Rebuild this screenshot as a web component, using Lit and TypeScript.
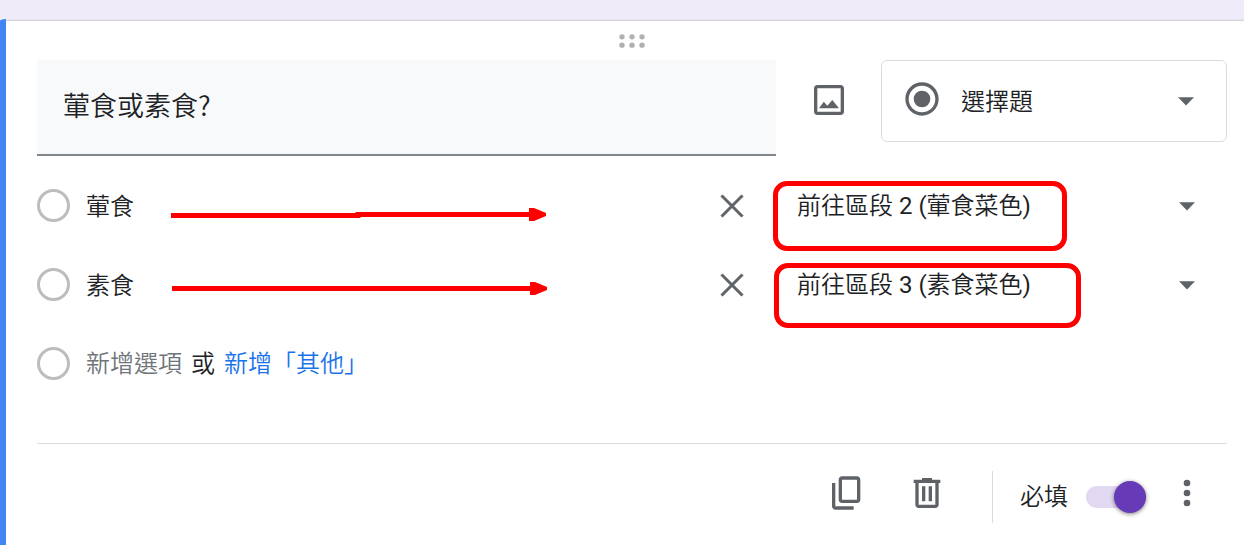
import { LitElement, html, svg, css } from "lit";
import { customElement, state } from "lit/decorators.js";

const paths = {
  image: svg`<path d="M19 3H5c-1.1 0-2 .9-2 2v14c0 1.1.9 2 2 2h14c1.1 0 2-.9 2-2V5c0-1.100-.9-2-2-2zm0 16H5V5h14v14z"/><path d="M6 17l2.900-4 2.100 2.500 3-3.500 4 5z"/>`,
  radio: svg`<path d="M12 2C6.480 2 2 6.480 2 12s4.480 10 10 10 10-4.480 10-10S17.520 2 12 2zm0 18c-4.420 0-8-3.580-8-8s3.580-8 8-8 8 3.580 8 8-3.580 8-8 8z"/><circle cx="12" cy="12" r="5"/>`,
  arrow: svg`<path d="M7.200 9.800l4.800 4.900 4.800-4.900z"/>`,
  close: svg`<path d="M18.700 6.300L17.700 5.300 12 11 6.300 5.300 5.300 6.300 11 12 5.300 17.700 6.300 18.700 12 13 17.700 18.700 18.700 17.700 13 12z" stroke="#5f6368" stroke-width="0.400"/>`,
  copy: svg`<path d="M18 2H9c-1.100 0-2 .9-2 2v12c0 1.100.9 2 2 2h9c1.100 0 2-.9 2-2V4c0-1.100-.9-2-2-2zm0 14H9V4h9v12z"/><path d="M3 6h2v14h11v2H5c-1.100 0-2-.9-2-2z"/>`,
  trash: svg`<path d="M15 4V3H9v1H4v2h1v13c0 1.100.9 2 2 2h10c1.100 0 2-.9 2-2V6h1V4h-5zm2 15H7V6h10v13z"/><path d="M9 8h2v9H9zm4 0h2v9h-2z"/>`,
  more: svg`<circle cx="12" cy="6" r="2"/><circle cx="12" cy="12" r="2"/><circle cx="12" cy="18" r="2"/>`,
  drag: svg`<circle cx="6" cy="9.500" r="1.600"/><circle cx="12" cy="9.500" r="1.600"/><circle cx="18" cy="9.500" r="1.600"/><circle cx="6" cy="14.500" r="1.600"/><circle cx="12" cy="14.500" r="1.600"/><circle cx="18" cy="14.500" r="1.600"/>`,
};

const icon = (name: keyof typeof paths) =>
  html`<svg class="icon" viewBox="0 0 24 24" aria-hidden="true">${paths[name]}</svg>`;

interface Choice {
  label: string;
  target: string;
  line: string;
  mark: string;
}

@customElement("app-root")
export class AppRoot extends LitElement {
  @state() private required = true;

  private choices: Choice[] = [
    { label: "葷食", target: "前往區段 2 (葷食菜色)", line: "M0 9.500H187V8.500H360", mark: "first" },
    { label: "素食", target: "前往區段 3 (素食菜色)", line: "M0 8.500H360", mark: "second" },
  ];

  static styles = css`
    :host {
      display: flex;
      box-sizing: border-box;
      min-height: 100vh;
      padding-top: 19px;
      background: #f0ebf8;
      color: #202124;
      font: 400 24px/32px Roboto, "Noto Sans CJK TC DemiLight", "Noto Sans CJK TC", sans-serif;
    }
    * {
      box-sizing: border-box;
    }
    input,
    select,
    button {
      appearance: none;
      margin: 0;
      padding: 0;
      border: 0;
      border-radius: 0;
      background: none;
      color: inherit;
      font: inherit;
      min-width: 0;
    }
    button {
      cursor: pointer;
    }
    .icon {
      display: block;
      width: 40px;
      height: 40px;
      fill: #5f6368;
    }
    .accent {
      flex: none;
      width: 6px;
      border-top-left-radius: 6px 2px;
      background: #4285f4;
    }
    .card {
      flex: 1;
      min-width: 0;
      margin-top: 2px;
      padding: 0 17px 0 31px;
      background: #fff;
      box-shadow: 0 0 2px rgba(0, 0, 0, 0.35);
      clip-path: inset(-2px 0 0 0);
    }
    .drag {
      display: flex;
      justify-content: center;
      height: 39px;
    }
    .drag .icon {
      fill: #b0b0b0;
    }
    .head {
      display: grid;
      grid-template-columns: 1fr 105px 346px;
      align-items: start;
      margin-bottom: 10px;
    }
    .title {
      height: 96px;
      padding: 0 26px 6px;
      border-bottom: 2px solid #80868b;
      background: #f8f9fa;
      font-family: "Noto Sans CJK TC", sans-serif;
      font-weight: 350;
      font-size: 27px;
    }
    .picture {
      justify-self: center;
      margin-top: 20px;
    }
    .pick {
      display: grid;
      align-items: center;
      position: relative;
    }
    .pick > .icon {
      pointer-events: none;
    }
    .kind {
      grid-template-columns: 20px 40px 1fr 40px 20px;
      height: 82px;
      border: 1px solid #dadce0;
      border-radius: 6px;
    }
    .kind select {
      grid-area: 1 / 1 / 2 / 6;
      height: 80px;
      padding-top: 2px;
      padding-left: 79px;
    }
    .kind > .icon {
      grid-area: 1 / 4;
    }
    .kind > .lead {
      grid-area: 1 / 2;
      margin-bottom: 4px;
    }
    .row {
      position: relative;
      display: grid;
      grid-template-columns: 33px 1fr 40px 45px 430px;
      align-items: center;
      height: 79px;
    }
    .circle {
      width: 33px;
      height: 33px;
      border: 3px solid #bdbdbd;
      border-radius: 50%;
    }
    .name {
      height: 40px;
      margin-left: 16px;
      padding-bottom: 2px;
    }
    .row .pick {
      grid-column: 5;
      grid-template-columns: 1fr 40px 20px;
    }
    .row .pick select {
      grid-area: 1 / 1 / 2 / 4;
      height: 79px;
      padding-right: 60px;
    }
    .row .pick > .icon {
      grid-area: 1 / 2;
    }
    .pointer {
      position: absolute;
      left: 134px;
      top: 40px;
      width: 380px;
      height: 18px;
      pointer-events: none;
    }
    .second .pointer {
      top: 35px;
      left: 135px;
    }
    .pointer .line {
      fill: none;
      stroke: #f00;
      stroke-width: 5px;
    }
    .pointer .tip {
      fill: #f00;
    }
    .outline {
      position: absolute;
      left: -24px;
      top: 15px;
      width: 294px;
      height: 70px;
      border: 5px solid #f00;
      border-radius: 14px;
      pointer-events: none;
    }
    .second .outline {
      left: -23px;
      top: 18px;
      width: 307px;
      height: 65px;
    }
    .add {
      display: flex;
      gap: 9px;
      margin-left: 16px;
      white-space: nowrap;
    }
    .add .new {
      color: #70757a;
    }
    .add .other {
      color: #1a73e8;
    }
    .foot {
      display: flex;
      justify-content: flex-end;
      align-items: center;
      height: 106px;
      margin-top: 40px;
      padding-right: 20px;
      border-top: 1px solid #dadce0;
    }
    .tools {
      display: flex;
      gap: 40px;
      margin-bottom: 8px;
    }
    .rule {
      width: 1px;
      height: 52px;
      margin: 0 27px 0 45px;
      background: #dadce0;
    }
    .need {
      display: flex;
      align-items: center;
      gap: 18px;
      margin-right: 21px;
    }
    .switch {
      display: flex;
      align-items: center;
      width: 60px;
      height: 22px;
      border-radius: 11px;
      background: #e1d8f1;
    }
    .switch::before {
      content: "";
      width: 32px;
      height: 32px;
      border-radius: 50%;
      background: #fff;
      box-shadow: 0 1px 4px rgba(0, 0, 0, 0.5);
    }
    .switch:checked::before {
      margin-left: auto;
      background: #673ab7;
    }
    .more {
      margin-bottom: 8px;
    }
  `;

  private renderChoice(c: Choice) {
    return html`<div class="row ${c.mark}">
      <input class="circle" type="radio" name="answer" aria-label=${c.label} disabled />
      <input class="name" type="text" aria-label="選項" .value=${c.label} />
      <button aria-label="移除">${icon("close")}</button>
      <div class="pick">
        <select aria-label="前往">
          <option>${c.target}</option>
        </select>
        ${icon("arrow")}
        <div class="outline"></div>
      </div>
      <svg class="pointer" viewBox="0 0 380 18" aria-hidden="true">
        <path class="line" d=${c.line} />
        <path class="tip" d="M358 2L363 2L375 7V10L363 15L358 15z" />
      </svg>
    </div>`;
  }

  render() {
    return html`
      <div class="accent"></div>
      <main class="card">
        <div class="drag">${icon("drag")}</div>
        <div class="head">
          <input class="title" type="text" aria-label="問題" value="葷食或素食?" />
          <button class="picture" aria-label="新增圖片">${icon("image")}</button>
          <div class="pick kind">
            <svg class="icon lead" viewBox="0 0 24 24" aria-hidden="true">${paths.radio}</svg>
            <select aria-label="題型">
              <option>選擇題</option>
            </select>
            ${icon("arrow")}
          </div>
        </div>
        ${this.choices.map((c) => this.renderChoice(c))}
        <div class="row">
          <input class="circle" type="radio" name="answer" aria-label="新增選項" disabled />
          <div class="add">
            <button class="new">新增選項</button>
            <span>或</span>
            <button class="other">新增「其他」</button>
          </div>
        </div>
        <div class="foot">
          <div class="tools">
            <button aria-label="複製">${icon("copy")}</button>
            <button aria-label="刪除">${icon("trash")}</button>
          </div>
          <div class="rule"></div>
          <label class="need">
            必填
            <input
              class="switch"
              type="checkbox"
              role="switch"
              .checked=${this.required}
              @change=${(e: Event) => (this.required = (e.target as HTMLInputElement).checked)}
            />
          </label>
          <button class="more" aria-label="更多選項">${icon("more")}</button>
        </div>
      </main>
    `;
  }
}
